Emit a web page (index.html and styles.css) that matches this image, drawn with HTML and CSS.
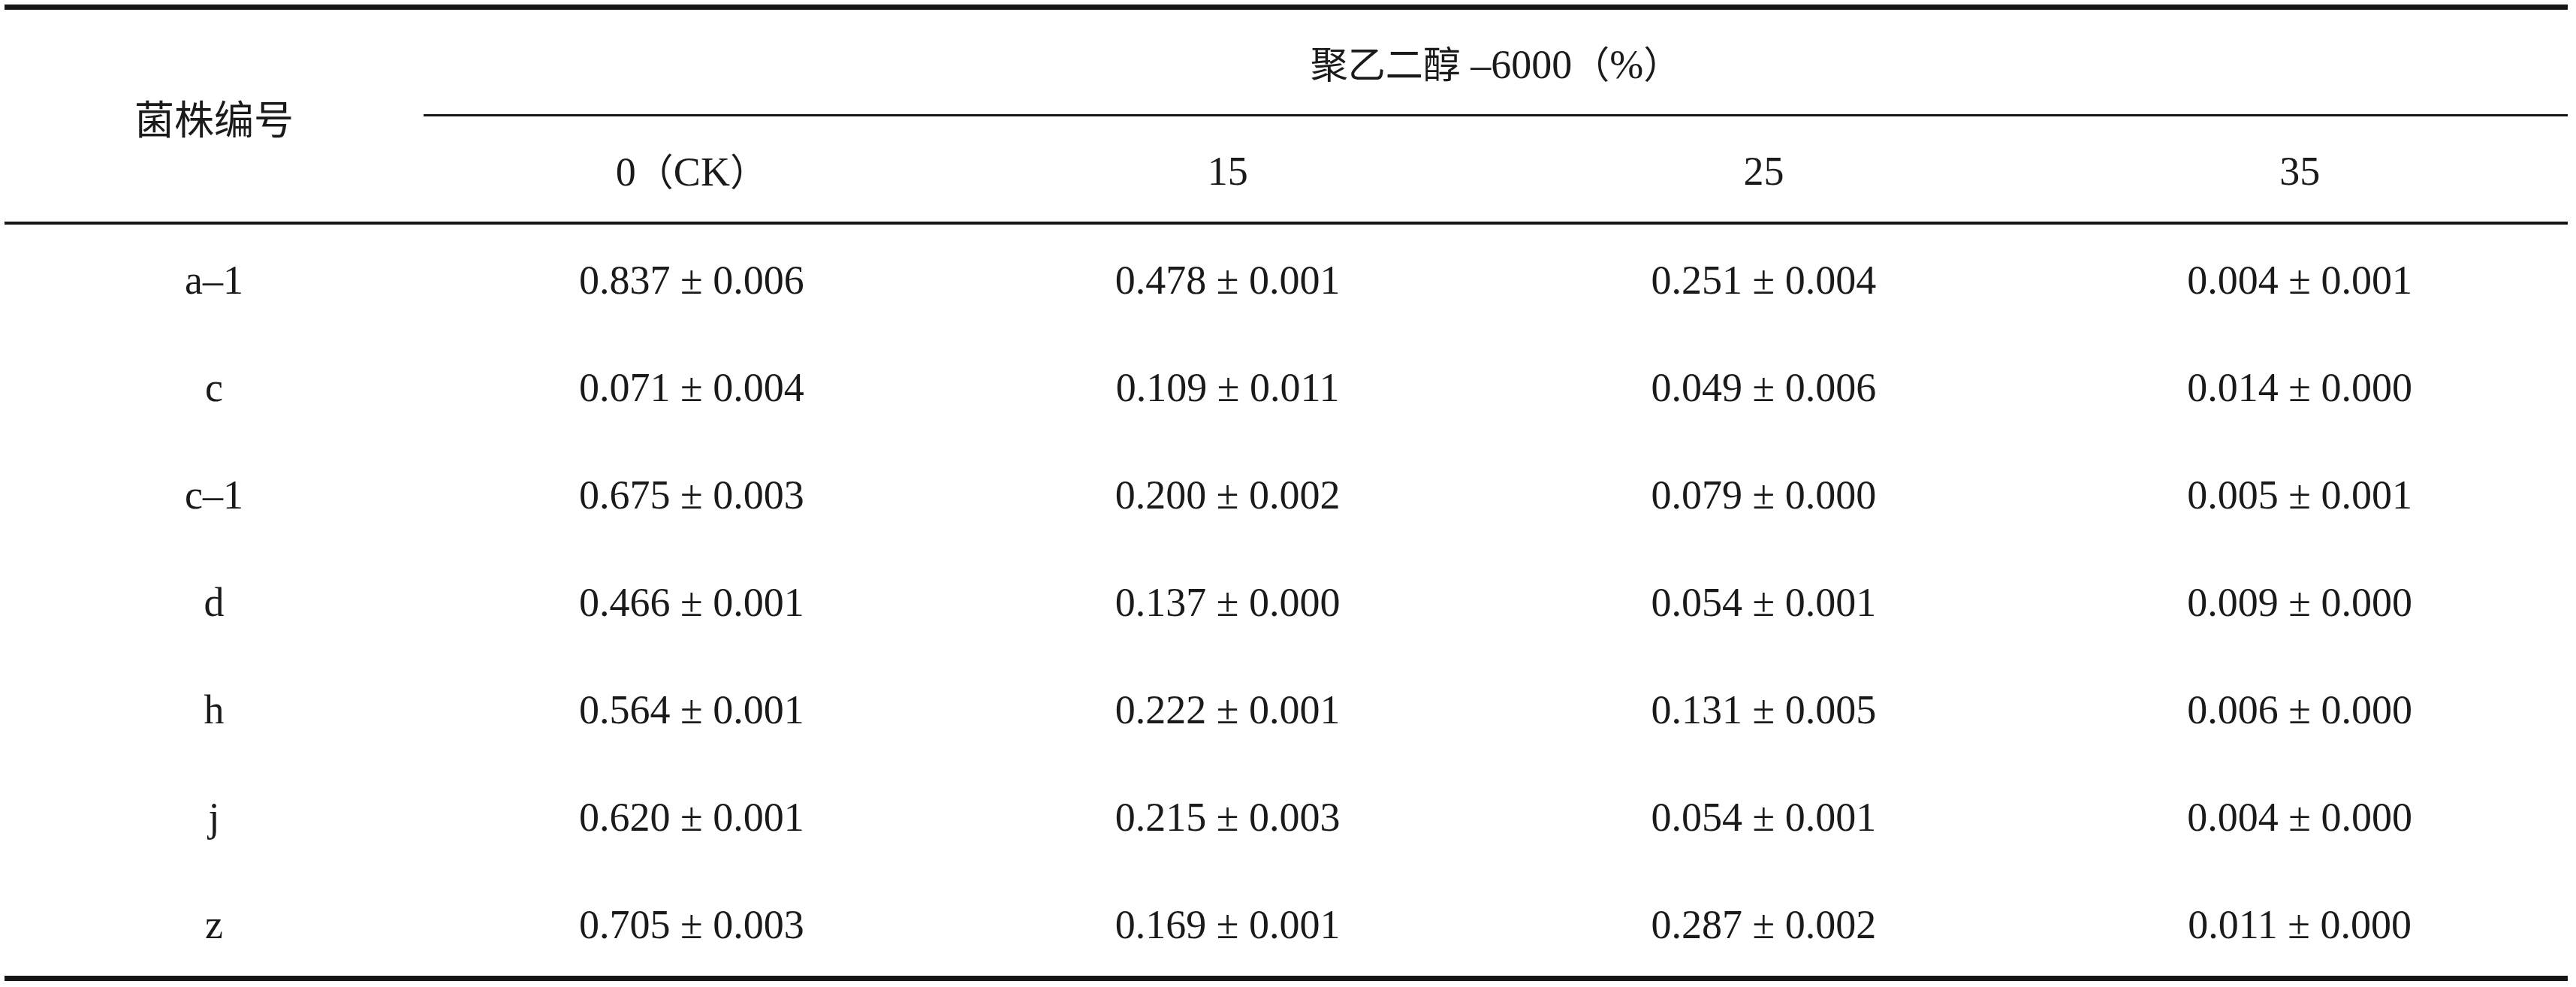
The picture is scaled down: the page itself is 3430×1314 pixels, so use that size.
FILE: index.html
```html
<!DOCTYPE html>
<html lang="zh">
<head>
<meta charset="utf-8">
<title>表</title>
<link rel="stylesheet" href="styles.css">
</head>
<body>
<table class="data">
  <colgroup>
    <col class="c-strain">
    <col class="c-val">
    <col class="c-val">
    <col class="c-val">
    <col class="c-val">
  </colgroup>
  <thead>
    <tr class="h1">
      <th rowspan="2" class="strain-head cjk">菌株编号</th>
      <th colspan="4" class="peg-head"><span class="cjk">聚乙二醇</span> –6000<span class="cjk">（</span>%<span class="cjk">）</span></th>
    </tr>
    <tr class="h2">
      <th>0<span class="cjk">（</span>CK<span class="cjk">）</span></th>
      <th>15</th>
      <th>25</th>
      <th>35</th>
    </tr>
  </thead>
  <tbody>
    <tr><td>a–1</td><td>0.837 ± 0.006</td><td>0.478 ± 0.001</td><td>0.251 ± 0.004</td><td>0.004 ± 0.001</td></tr>
    <tr><td>c</td><td>0.071 ± 0.004</td><td>0.109 ± 0.011</td><td>0.049 ± 0.006</td><td>0.014 ± 0.000</td></tr>
    <tr><td>c–1</td><td>0.675 ± 0.003</td><td>0.200 ± 0.002</td><td>0.079 ± 0.000</td><td>0.005 ± 0.001</td></tr>
    <tr><td>d</td><td>0.466 ± 0.001</td><td>0.137 ± 0.000</td><td>0.054 ± 0.001</td><td>0.009 ± 0.000</td></tr>
    <tr><td>h</td><td>0.564 ± 0.001</td><td>0.222 ± 0.001</td><td>0.131 ± 0.005</td><td>0.006 ± 0.000</td></tr>
    <tr><td>j</td><td>0.620 ± 0.001</td><td>0.215 ± 0.003</td><td>0.054 ± 0.001</td><td>0.004 ± 0.000</td></tr>
    <tr class="last"><td>z</td><td>0.705 ± 0.003</td><td>0.169 ± 0.001</td><td>0.287 ± 0.002</td><td>0.011 ± 0.000</td></tr>
  </tbody>
</table>
</body>
</html>
```

FILE: styles.css
```css
html, body {
  margin: 0;
  padding: 0;
  background: #ffffff;
}

body {
  padding: 6px 0 0 6px;
  font-family: "Liberation Serif", "Noto Sans CJK SC", serif;
  color: #1a1a1a;
}

.cjk {
  font-family: "Noto Sans CJK SC", "Noto Sans CJK JP", sans-serif;
  font-weight: 400;
}

.data {
  width: 3413px;
  table-layout: fixed;
  border-collapse: separate;
  border-spacing: 0;
  border-top: 7px solid #161616;
  border-bottom: 7px solid #161616;
  font-size: 54px;
}

.c-strain {
  width: 558px;
}

.c-val {
  width: 713.75px;
}

th, td {
  padding: 6px 0 0 0;
  text-align: center;
  vertical-align: middle;
  font-weight: 400;
  line-height: 1.2;
  white-space: nowrap;
}

.h1 {
  height: 142px;
}

.h2 {
  height: 144px;
}

.strain-head {
  font-size: 53px;
  border-bottom: 4px solid #161616;
}

.peg-head {
  border-bottom: 3px solid #161616;
}

.peg-head .cjk {
  font-size: 50px;
}

.h2 th {
  border-bottom: 4px solid #161616;
}

.h2 th .cjk {
  font-size: 50px;
}

tbody tr {
  height: 143px;
}

tbody tr.last {
  height: 142px;
}
```
